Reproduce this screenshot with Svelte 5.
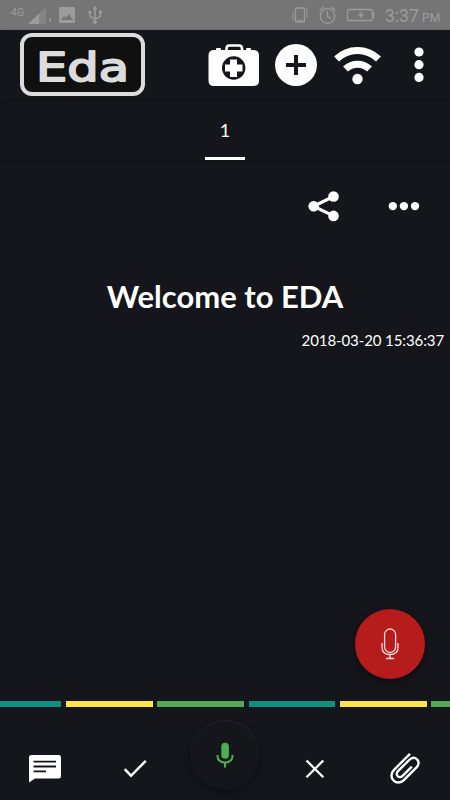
<script lang="ts">
  let time = $state('3:37');
  let page = $state(1);
  let title = $state('Welcome to EDA');
  let stamp = $state('2018-03-20 15:36:37');

  let segments = ['teal', 'yellow', 'green', 'teal', 'yellow', 'green'];
</script>

<div class="screen">
  <div class="status">
    <div class="status-left">
      <span class="network">4G</span>
      <svg width="78" height="30" viewBox="26 0 78 30">
        <path d="M28 24 46 7V24Z" fill="#848484" />
        <path d="M28 24 39 13.500V24Z" fill="#9b9b9b" />
        <path d="M49 19h2v2l-1 2" fill="#9b9b9b" />
        <path
          fill-rule="evenodd"
          d="M60.500 7h13a1.500 1.500 0 0 1 1.500 1.500v13a1.500 1.500 0 0 1-1.500 1.500h-13a1.500 1.500 0 0 1-1.500-1.500v-13A1.500 1.500 0 0 1 60.500 7ZM61 20h12l-4-6-3 4-2-2Z"
          fill="#9b9b9b"
        />
        <g fill="none" stroke="#9b9b9b" stroke-width="1.500">
          <path d="M95 8v14M89.800 12v3q0 1.500 1.500 2l3.700 2 4.500-2q1-.5 1-2v-3" />
        </g>
        <g fill="#9b9b9b">
          <path d="m95 5.500 2.300 4h-4.600Z" />
          <circle cx="95" cy="22" r="2" />
          <circle cx="89.800" cy="12" r="1.600" />
          <path d="M99 10.500h3v3h-3z" />
        </g>
      </svg>
    </div>
    <div class="status-right">
      <svg width="86" height="30" viewBox="290 0 86 30" fill="none" stroke="#9b9b9b" stroke-width="1.300">
        <rect x="295.500" y="8" width="9" height="14" rx="1" />
        <path d="M297 20.500h6M292.500 11l1 1.500-1 1.500 1 1.500-1 1.500 1 1.500-1 2M307.500 8l-1 1.500 1 1.500-1 1.500 1 1.500-1 1.500 1 2" stroke-width="1" />
        <circle cx="327.500" cy="16" r="7.300" />
        <path d="M327.500 11.500v5l3.500 2M319.500 10.500l4-3.500M335.500 10.500l-4-3.500" />
        <rect x="347.500" y="9.500" width="25" height="11" rx="1.500" />
        <path d="M373.500 12.500v5" stroke-width="2" />
        <path d="m362 11-4.500 4.500h3l-1 3.500 5-5h-3.500Z" fill="#9b9b9b" stroke="none" />
      </svg>
      <span class="clock">{time} <small>PM</small></span>
    </div>
  </div>

  <header>
    <div class="logo">
      <svg width="117" height="55" viewBox="0 0 117 55">
        <text x="12" y="43.500" textLength="93" lengthAdjust="spacingAndGlyphs">Eda</text>
      </svg>
    </div>
    <div class="tools">
      <svg width="51" height="43" viewBox="208 44 51 43">
        <path d="M226.500 50v-1.500q0-3 3-3h9.500q3 0 3 3V50" fill="none" stroke="#fff" stroke-width="2.600" />
        <path d="M216 50v-1q0-1 1-1h3q1 0 1 1v1h25v-1q0-1 1-1h3q1 0 1 1v1h2.500q5.500 0 5.500 5.500v25q0 5.500-5.500 5.500h-39.500q-5.500 0-5.500-5.500v-25q0-5.500 5.500-5.500Z" fill="#fff" />
        <circle cx="233.700" cy="68" r="11.700" fill="#15151c" />
        <path d="M230 59.500h7v5h5.500v7h-5.500v5.500h-7v-5.500h-5v-7h5Z" fill="#fff" />
      </svg>
      <svg width="42" height="42" viewBox="0 0 42 42">
        <circle cx="21" cy="21" r="21" fill="#fff" />
        <path d="M21 11v20M11 21h20" stroke="#15151c" stroke-width="4" />
      </svg>
      <svg width="48" height="40" viewBox="333 45 48 40" fill="none" stroke="#fff" stroke-width="7">
        <path d="M336.500 59a30 30 0 0 1 42 0" />
        <path d="M345.500 69a17.500 17.500 0 0 1 24 0" />
        <circle cx="357.500" cy="79" r="5.200" fill="#fff" stroke="none" />
      </svg>
      <svg class="more" width="10" height="36" viewBox="0 0 10 36" fill="#fff">
        <circle cx="5" cy="5" r="4.600" />
        <circle cx="5" cy="17.700" r="4.600" />
        <circle cx="5" cy="30.400" r="4.600" />
      </svg>
    </div>
  </header>

  <nav class="tabs">
    <div class="tab">{page}</div>
  </nav>

  <main>
    <div class="actions">
      <svg width="32" height="32" viewBox="308 190 32 32">
        <path d="m333.500 196.500-20 9.700 20 9.700" fill="none" stroke="#fff" stroke-width="3.200" />
        <g fill="#fff">
          <circle cx="333.500" cy="196.500" r="5.300" />
          <circle cx="313.700" cy="206.200" r="5.300" />
          <circle cx="333.500" cy="215.900" r="5.300" />
        </g>
      </svg>
      <svg width="32" height="32" viewBox="388 190 32 32" fill="#fff">
        <circle cx="392.800" cy="206.100" r="4.200" />
        <circle cx="403.900" cy="206.100" r="4.200" />
        <circle cx="415" cy="206.100" r="4.200" />
      </svg>
    </div>
    <h1>{title}</h1>
    <p class="stamp">{stamp}</p>
    <button class="record" aria-label="Record">
      <svg width="20" height="34" viewBox="380 627 20 34" fill="none" stroke="#f5dcdc" stroke-width="1.300">
        <rect x="384.600" y="629" width="11" height="23.500" rx="5.500" />
        <path d="M382 643v4q0 7.500 8 7.500t8-7.500v-4M390 654.500v4M386 658.500h8" />
      </svg>
    </button>
  </main>

  <div class="strip">
    {#each segments as color}
      <span class={color}></span>
    {/each}
  </div>

  <footer>
    <div class="item">
      <svg width="32" height="28" viewBox="29 755 32 28">
        <path d="M31 755h27.500q2.500 0 2.500 2.500v18.500q0 2.500-2.500 2.500H35l-6 4V757.500q0-2.500 2-2.500Z" fill="#fff" />
        <path d="M33.500 761.700H56M33.500 766.500H56M33.500 771.300H46" stroke="#15151c" stroke-width="1.800" />
      </svg>
    </div>
    <div class="item">
      <svg width="24" height="28" viewBox="123 755 24 28">
        <path d="m124.700 769.200 6.300 6.600 14.800-15" fill="none" stroke="#fff" stroke-width="2.500" />
      </svg>
    </div>
    <div class="item">
      <button class="speak" aria-label="Speak">
        <svg width="18" height="26" viewBox="216 741 18 26">
          <rect x="221.300" y="741.700" width="7.600" height="16" rx="3.800" fill="#4caf50" />
          <path d="M217.400 754q0 7.500 7.600 7.500t7.600-7.500M225 761v5.500" fill="none" stroke="#4caf50" stroke-width="2" />
        </svg>
      </button>
    </div>
    <div class="item">
      <svg width="20" height="28" viewBox="305 755 20 28">
        <path d="m306.500 760.500 16.800 16.800M323.300 760.500l-16.800 16.800" stroke="#fff" stroke-width="2.300" />
      </svg>
    </div>
    <div class="item">
      <svg width="30" height="32" viewBox="390.500 753 30 32">
        <path
          d="M410.500 753.800 394.500 769.800C391.200 773.100 391.200 778 394.200 780.600C397 783.200 401.300 783.100 404.300 780.100L417 767.400C419.600 764.800 419.800 761.500 417.600 759.500C415.300 757.300 412.200 757.500 409.700 760L398.500 771.200C396.900 772.800 396.900 775 398.100 776.200C399.400 777.500 401.500 777.400 403.100 775.800L412.300 766.600"
          fill="none"
          stroke="#fff"
          stroke-width="2.400"
        />
      </svg>
    </div>
  </footer>
</div>

<style>
  :global(body) {
    margin: 0;
    background: #15151c;
  }

  .screen {
    display: flex;
    flex-direction: column;
    width: 450px;
    height: 800px;
    overflow: hidden;
    background: #15151c;
    color: #fff;
    font-family: Lato, sans-serif;
  }

  svg {
    display: block;
    flex: none;
  }

  button {
    display: flex;
    justify-content: center;
    align-items: center;
    width: 70px;
    height: 70px;
    padding: 0;
    border: none;
    border-radius: 50%;
  }

  .status {
    display: flex;
    justify-content: space-between;
    height: 30px;
    background: #757575;
    color: #9b9b9b;
    font-family: Roboto, sans-serif;
  }

  .status-left,
  .status-right {
    display: flex;
  }

  .network {
    width: 15px;
    padding: 6px 0 0 11px;
    font-size: 10.500px;
    line-height: 14px;
  }

  .clock {
    width: 65px;
    padding-left: 9px;
    font-size: 17.500px;
    line-height: 32px;
    white-space: nowrap;

    & small {
      margin-left: -1px;
      font-size: 12px;
    }
  }

  header {
    display: flex;
    justify-content: space-between;
    align-items: center;
    box-sizing: border-box;
    height: 70px;
    padding: 0 26px 0 20px;
    box-shadow: 0 1px 2px #101015;
  }

  .logo {
    box-sizing: border-box;
    width: 125px;
    height: 63px;
    margin-bottom: 1px;
    border: 4px solid #dcdcdc;
    border-radius: 12px;
    background: #101010;

    & text {
      fill: #dcdcdc;
      stroke: #dcdcdc;
      stroke-width: 1.800px;
      stroke-linejoin: round;
      font-family: 'DejaVu Sans', sans-serif;
      font-size: 39px;
    }
  }

  .tools {
    display: flex;
    align-items: center;
    gap: 16px;

    & .more {
      margin-left: 17px;
    }
  }

  .tabs {
    display: flex;
    justify-content: center;
    height: 60px;
    box-shadow: 0 1px 2px #101015;
  }

  .tab {
    box-sizing: border-box;
    width: 40px;
    border-bottom: 3px solid #fff;
    font-size: 18px;
    line-height: 61px;
    text-align: center;
  }

  main {
    display: flex;
    flex-direction: column;
    flex: 1;
  }

  .actions {
    display: flex;
    justify-content: flex-end;
    gap: 48px;
    padding: 30px 30px 0 0;
  }

  h1 {
    margin: 54px 0 0;
    font-size: 31px;
    font-weight: 700;
    line-height: 40px;
    text-align: center;
  }

  .stamp {
    margin: 14px 6px 0 0;
    font-size: 15px;
    line-height: 20px;
    letter-spacing: -0.100px;
    text-align: right;
  }

  .record {
    align-self: flex-end;
    margin: auto 25px 22px 0;
    background: #b71c1c;
    box-shadow: 0 3px 6px #0d0d12;
  }

  .strip {
    display: flex;
    gap: 4.800px;
    height: 6px;
    margin-left: -25.200px;

    & span {
      flex: none;
      width: 86.500px;
    }

    & .teal {
      background: #0f8f83;
    }

    & .yellow {
      background: #fbe64d;
    }

    & .green {
      background: #53a954;
    }
  }

  footer {
    display: flex;
    height: 93px;
  }

  .item {
    display: flex;
    flex: 1;
    justify-content: center;
    align-items: center;
    padding-top: 31px;
  }

  .speak {
    margin-top: -28px;
    background: #15151c;
    box-shadow:
      0 3px 6px #0e0e13,
      inset 0 1px 0 #25252b;
  }
</style>
